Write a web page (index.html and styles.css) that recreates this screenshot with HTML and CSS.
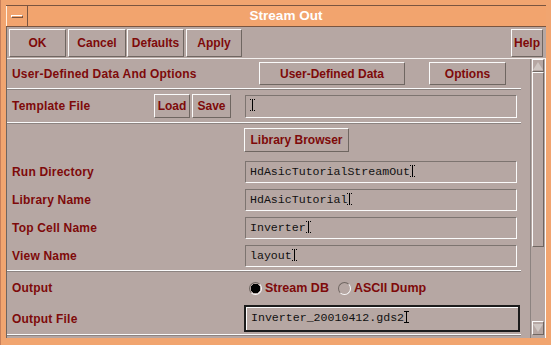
FILE: index.html
```html
<!DOCTYPE html>
<html lang="en">
<head>
    <meta charset="UTF-8">
    <title>Stream Out</title>
    <link rel="stylesheet" href="styles.css">
</head>
<body>
    <div class="window">
        <div class="titlebar">
            <div class="menu-box"><span class="dash"></span></div>
            <div class="title">Stream Out</div>
        </div>
        <div class="dialog">
            <div class="toolbar">
                <button class="btn w-ok">OK</button>
                <button class="btn w-cancel">Cancel</button>
                <button class="btn w-defaults">Defaults</button>
                <button class="btn w-apply">Apply</button>
                <span class="spacer"></span>
                <button class="btn w-help">Help</button>
            </div>
            <div class="main">
                <div class="form">
                    <div class="row r-udd">
                        <label class="lbl">User-Defined Data And Options</label>
                        <div class="cell">
                            <button class="btn w-udd">User-Defined Data</button>
                            <button class="btn w-options">Options</button>
                        </div>
                    </div>
                    <div class="sep"></div>
                    <div class="row r-template">
                        <div class="lbl-wrap">
                            <label class="lbl">Template File</label>
                            <div class="pair">
                                <button class="btn w-load">Load</button>
                                <button class="btn w-save">Save</button>
                            </div>
                        </div>
                        <div class="field"><span class="caret"></span></div>
                    </div>
                    <div class="sep"></div>
                    <div class="row r-browser">
                        <span></span>
                        <div class="cell"><button class="btn w-browser">Library Browser</button></div>
                    </div>
                    <div class="row r-field">
                        <label class="lbl">Run Directory</label>
                        <div class="field">HdAsicTutorialStreamOut<span class="caret"></span></div>
                    </div>
                    <div class="row r-field">
                        <label class="lbl">Library Name</label>
                        <div class="field">HdAsicTutorial<span class="caret"></span></div>
                    </div>
                    <div class="row r-field">
                        <label class="lbl">Top Cell Name</label>
                        <div class="field">Inverter<span class="caret"></span></div>
                    </div>
                    <div class="row r-field">
                        <label class="lbl">View Name</label>
                        <div class="field">layout<span class="caret"></span></div>
                    </div>
                    <div class="sep"></div>
                    <div class="row r-output">
                        <label class="lbl">Output</label>
                        <div class="cell radios">
                            <span class="radio on"></span><span class="opt">Stream DB</span>
                            <span class="radio"></span><span class="opt">ASCII Dump</span>
                        </div>
                    </div>
                    <div class="row r-outfile">
                        <label class="lbl">Output File</label>
                        <div class="field focus">Inverter_20010412.gds2<span class="caret solid"></span></div>
                    </div>
                    <div class="sep"></div>
                </div>
                <div class="scrollbar">
                    <div class="arrow up"><span class="tri-up"></span></div>
                    <div class="thumb"></div>
                    <div class="trough"></div>
                    <div class="arrow down"><span class="tri-down"></span></div>
                </div>
            </div>
        </div>
    </div>
</body>
</html>
```

FILE: styles.css
```css
*{margin:0;padding:0;box-sizing:border-box}
body{width:551px;height:345px;overflow:hidden;background:#f1a570}
.window{padding:5px 5px 7px 5px;height:345px;display:flex;flex-direction:column;border-left:1px solid #c8805a}

/* title */
.titlebar{height:22px;display:flex;border-top:1px solid #7a5540;border-bottom:1px solid #7a5540;background:#f2a46e}
.menu-box{width:22px;border-right:1px solid #7a5540;border-left:1px solid #fff0e0;display:flex;align-items:center;justify-content:center}
.dash{display:block;width:12px;height:3px;border:1px solid;border-color:#fff #7a5540 #7a5540 #fff}
.title{flex:1;text-align:center;color:#fff;font:bold 13.5px "Liberation Sans",Arial,sans-serif;line-height:20px;padding-right:2px}

/* dialog */
.dialog{flex:1;background:#b6a7a3;display:flex;flex-direction:column;border-left:1px solid #6f6560}
.btn{background:#b6a7a3;border:1px solid;border-color:#fbfbfb #6f6661 #6f6661 #fbfbfb;color:#7e0a0a;font:bold 12px "Liberation Sans",Arial,sans-serif;text-align:center}
.toolbar{height:32px;display:flex;align-items:flex-start;padding:2px 3px 0 2px;gap:2px;border-bottom:1px solid #f4f0ee}
.toolbar .btn{height:28px}
.w-ok{width:57px}
.w-cancel{width:58px}
.w-defaults{width:57px;margin-left:-1px}
.w-apply{width:56px}
.w-help{width:32px}
.spacer{flex:1}

.main{flex:1;display:flex;min-height:0}
.form{width:523px;flex-shrink:0;display:flex;flex-direction:column}
.row{display:grid;grid-template-columns:238px 272px;align-items:center}
.lbl{color:#7e0a0a;font:bold 12px "Liberation Sans",Arial,sans-serif;padding-left:5px;white-space:nowrap;letter-spacing:0.2px}
.sep{height:2px;width:514px;border-top:1px solid #fbfbfb;border-bottom:1px solid #8c8380}

.r-udd{height:29px}
.r-udd .cell{display:flex;gap:24px;padding-left:14px}
.w-udd{width:146px;height:23px}
.w-options{width:77px;height:23px}

.r-template{height:32px}
.lbl-wrap{display:flex;align-items:center;justify-content:space-between;padding-right:14px}
.pair{display:flex;gap:2px}
.w-load{width:36px;height:24px}
.w-save{width:39px;height:24px}

.r-browser{height:31px;padding-top:1px;margin-bottom:3px}
.w-browser{width:105px;height:24px;margin-left:-1px}

.field{height:22px;border:1px solid;border-color:#7d7470 #fbfbfb #fbfbfb #7d7470;font:11.6px "Liberation Mono","Courier New",monospace;color:#111;line-height:20px;padding-left:4px;white-space:nowrap}
.r-field{height:28px}
.r-template .field{height:23px}
.caret{display:inline-block;width:5px;height:12px;vertical-align:-2px;border-top:1px dotted #000;border-bottom:1px dotted #000;background:linear-gradient(#000,#000) center/1px 100% no-repeat}
.caret.solid{border-top-style:solid;border-bottom-style:solid}

.r-output{height:31px;padding-top:1px}
.radios{display:flex;align-items:center;padding-left:4px}
.radio{width:13px;height:13px;border-radius:50%;border:1px solid;border-color:#6f6661 #fbfbfb #fbfbfb #6f6661;margin-right:3px}
.radio.on{background:radial-gradient(circle,#000 0 4.5px,transparent 5px)}
.radio+.opt{margin-right:9px}
.opt{color:#7e0a0a;font:bold 12.5px "Liberation Sans",Arial,sans-serif}

.r-outfile{height:31px;grid-template-columns:237px 276px}
.field.focus{height:27px;border:2px solid #1c1c1c;box-shadow:inset 1px 1px 0 #fbfbfb;line-height:22px;padding-left:5px}

/* scrollbar */
.scrollbar{width:16px;flex-shrink:0;margin-left:auto;display:flex;flex-direction:column;border-left:1px solid #8c8380;border-right:1px solid #fbfbfb;padding:0 1px}
.arrow{height:13px;border:1px solid;border-color:#fbfbfb #6f6661 #6f6661 #fbfbfb;display:flex;align-items:center;justify-content:center}
.arrow.down{margin-bottom:3px;height:14px}
.tri-up{width:0;height:0;border-left:5px solid transparent;border-right:5px solid transparent;border-bottom:8px solid #cfc6c2}
.tri-down{width:0;height:0;border-left:5px solid transparent;border-right:5px solid transparent;border-top:8px solid #cfc6c2}
.thumb{height:175px;border:1px solid;border-color:#fbfbfb #6f6661 #6f6661 #fbfbfb}
.trough{flex:1}
```
